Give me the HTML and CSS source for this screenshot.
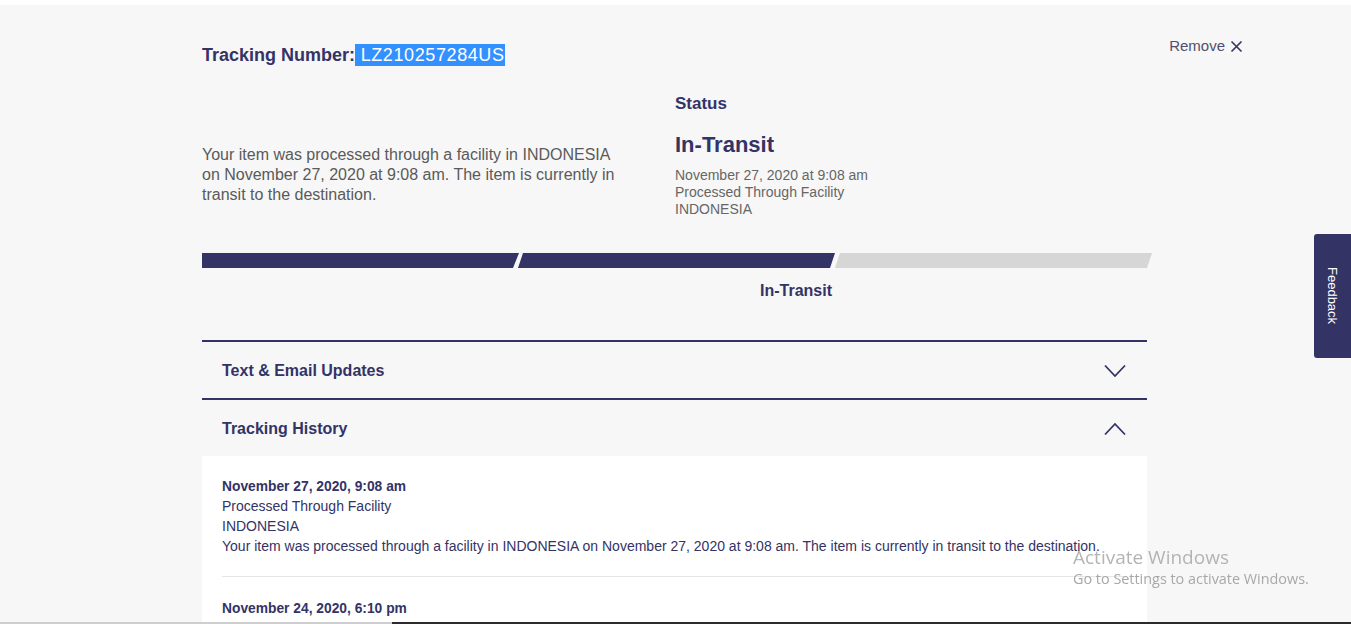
FILE: index.html
```html
<!DOCTYPE html>
<html lang="en">
<head>
<meta charset="utf-8">
<title>Tracking</title>
<link rel="stylesheet" href="styles.css">
</head>
<body>
<div class="topstrip"></div>
<main class="page">
  <div class="wrap">
    <div class="header">
      <h1 class="tn">Tracking Number:<span class="sel">&nbsp;LZ210257284US</span></h1>
      <a class="remove">Remove
        <svg width="13" height="13" viewBox="0 0 13 13"><path d="M1.5 1.5 L11.5 11.5 M11.5 1.5 L1.5 11.5" stroke="#333366" stroke-width="1.6" fill="none"/></svg>
      </a>
    </div>

    <div class="summary">
      <p class="desc">Your item was processed through a facility in INDONESIA on November 27, 2020 at 9:08 am. The item is currently in transit to the destination.</p>
      <div class="status">
        <h2 class="status-h">Status</h2>
        <div class="status-big">In-Transit</div>
        <div class="status-detail">November 27, 2020 at 9:08 am<br>Processed Through Facility<br>INDONESIA</div>
      </div>
    </div>

    <div class="bar">
      <div class="seg seg1"></div>
      <div class="seg seg2"></div>
      <div class="seg seg3"></div>
    </div>
    <div class="bar-labels">
      <div class="lbl"></div>
      <div class="lbl active">In-Transit</div>
      <div class="lbl"></div>
    </div>

    <section class="acc">
      <div class="acc-head">
        <span>Text &amp; Email Updates</span>
        <svg width="22" height="14" viewBox="0 0 22 14"><polyline points="1,1.5 11,12 21,1.5" fill="none" stroke="#333366" stroke-width="1.8"/></svg>
      </div>
    </section>
    <section class="acc">
      <div class="acc-head">
        <span>Tracking History</span>
        <svg width="22" height="14" viewBox="0 0 22 14"><polyline points="1,12.5 11,2 21,12.5" fill="none" stroke="#333366" stroke-width="1.8"/></svg>
      </div>
      <div class="history">
        <div class="entry">
          <div class="date">November 27, 2020, 9:08 am</div>
          <div>Processed Through Facility</div>
          <div>INDONESIA</div>
          <div>Your item was processed through a facility in INDONESIA on November 27, 2020 at 9:08 am. The item is currently in transit to the destination.</div>
        </div>
        <div class="entry">
          <div class="date">November 24, 2020, 6:10 pm</div>
          <div>Processed</div>
          <div>INDONESIA</div>
        </div>
      </div>
    </section>
  </div>
</main>

<a class="feedback">Feedback</a>

<div class="watermark">
  <div class="wm1">Activate Windows</div>
  <div class="wm2">Go to Settings to activate Windows.</div>
</div>
<div class="bottomline"><div class="bl-light"></div><div class="bl-dark"></div></div>
</body>
</html>
```

FILE: styles.css
```css
html, body {
  margin: 0;
  padding: 0;
  height: 100%;
  overflow: hidden;
}
body {
  font-family: "Liberation Sans", Arial, sans-serif;
  background: #f7f7f7;
  color: #333366;
}
.topstrip {
  height: 5px;
  background: #ffffff;
}
.page {
  background: #f7f7f7;
}
.wrap {
  width: 945px;
  margin: 0 auto;
  padding-top: 32px;
  padding-right: 2px;
}
.header {
  display: flex;
  justify-content: space-between;
  align-items: flex-start;
  margin-right: -96px;
}
.tn {
  margin: 7px 0 0 0;
  font-size: 18px;
  line-height: 22px;
  font-weight: bold;
  color: #333366;
}
.sel {
  display: inline-block;
  background: #3390ff;
  color: #ffffff;
  font-weight: normal;
  letter-spacing: 0.6px;
  line-height: 22px;
}
.remove {
  display: flex;
  align-items: center;
  gap: 5px;
  font-size: 15px;
  line-height: 18px;
  color: #4f4f6e;
}
.summary {
  display: grid;
  grid-template-columns: 473px 1fr;
  margin-top: 27px;
}
.desc {
  margin: 52px 0 0 0;
  width: 425px;
  font-size: 16px;
  line-height: 20px;
  color: #5a5a5a;
}
.status-h {
  margin: 0;
  font-size: 17px;
  line-height: 22px;
  font-weight: bold;
}
.status-big {
  margin-top: 16px;
  font-size: 22px;
  line-height: 28px;
  font-weight: bold;
}
.status-detail {
  margin-top: 8px;
  font-size: 14px;
  line-height: 17px;
  color: #666666;
}
.bar {
  display: flex;
  height: 15px;
  margin-top: 35px;
  margin-right: -5px;
}
.seg {
  flex: 1;
  background: #333366;
  clip-path: polygon(5px 0, 100% 0, calc(100% - 5px) 100%, 0 100%);
}
.seg1 {
  clip-path: polygon(0 0, 100% 0, calc(100% - 6px) 100%, 0 100%);
}
.seg2 {
  margin-left: -1px;
}
.seg3 {
  background: #d6d6d6;
}
.bar-labels {
  display: flex;
  margin-top: 13px;
  margin-right: -5px;
}
.lbl {
  flex: 1;
  height: 20px;
}
.lbl.active {
  text-align: right;
  font-size: 16px;
  line-height: 20px;
  font-weight: bold;
  padding-right: 5px;
}
.bar-labels + .acc {
  margin-top: 39px;
}
.acc {
  border-top: 2px solid #333366;
}
.acc-head {
  display: flex;
  justify-content: space-between;
  align-items: center;
  padding: 19px 21px 17px 20px;
  font-size: 16px;
  line-height: 20px;
  font-weight: bold;
}
.acc-head svg {
  margin-top: -1px;
}
.history {
  background: #ffffff;
  padding: 0 20px;
  height: 400px;
}
.entry {
  padding: 21px 0 20px;
  border-bottom: 1px solid #e6e6e6;
  font-size: 14px;
  line-height: 20px;
  color: #333366;
}
.entry .date {
  line-height: 19px;
}
.entry + .entry {
  padding-top: 22px;
}
.date {
  font-weight: bold;
  font-size: 13.8px;
}
.feedback {
  position: fixed;
  right: 0;
  top: 234px;
  width: 37px;
  height: 124px;
  background: #333366;
  color: #ffffff;
  border-radius: 3px 0 0 3px;
  writing-mode: vertical-rl;
  display: flex;
  align-items: center;
  justify-content: center;
  font-size: 13px;
}
.watermark {
  position: fixed;
  left: 1073px;
  top: 545px;
  font-family: "Open Sans", "Noto Sans", sans-serif;
  color: #b4b4b4;
  pointer-events: none;
}
.wm1 {
  font-size: 19px;
  line-height: 24px;
}
.wm2 {
  font-size: 14.4px;
  line-height: 20px;
  color: #a8a8a8;
}
.bottomline {
  position: fixed;
  left: 0;
  right: 0;
  bottom: 0;
  height: 2px;
  display: flex;
}
.bl-light {
  width: 392px;
  background: #cfcfcf;
}
.bl-dark {
  flex: 1;
  background: #2b2b2b;
}
```
